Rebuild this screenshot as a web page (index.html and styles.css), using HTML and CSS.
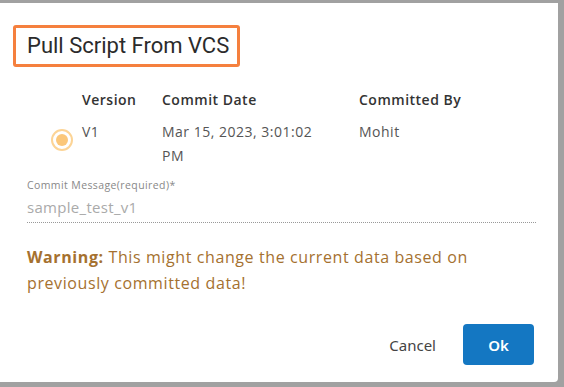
FILE: index.html
```html
<!DOCTYPE html>
<html>
<head>
    <title>Pull Script From VCS</title>
    <link rel="stylesheet" href="styles.css">
</head>
<body>
    <div class="dialog">
        <div class="title-box">
            <h1>Pull Script From VCS</h1>
        </div>

        <!-- Versions -->
        <div class="versions">
            <div class="row head">
                <div class="cell pick"></div>
                <div class="cell ver">Version</div>
                <div class="cell date">Commit Date</div>
                <div class="cell by">Committed By</div>
            </div>
            <div class="row">
                <div class="cell pick"><span class="radio"><span class="dot"></span></span></div>
                <div class="cell ver">V1</div>
                <div class="cell date">Mar 15, 2023, 3:01:02 PM</div>
                <div class="cell by">Mohit</div>
            </div>
        </div>

        <!-- Commit message -->
        <div class="field">
            <label>Commit Message(required)*</label>
            <div class="value">sample_test_v1</div>
        </div>

        <p class="warning"><strong>Warning:</strong> This might change the current data based on previously committed data!</p>

        <div class="actions">
            <button class="cancel">Cancel</button>
            <button class="ok">Ok</button>
        </div>
    </div>
</body>
</html>
```

FILE: styles.css
```css
body {
    margin: 0;
    background-color: #a1a1a1;
    font-family: "Open Sans", "Noto Sans", sans-serif;
    height: 387px;
    overflow: hidden;
}

.dialog {
    margin-top: 3px;
    width: 558px;
    height: 379px;
    background-color: #fff;
    border-radius: 0 0 4px 0;
    box-sizing: border-box;
    padding: 22px 0 0 13px;
    display: flex;
    flex-direction: column;
}

.title-box {
    align-self: flex-start;
    border: 3px solid #f5803e;
    border-radius: 3px;
    padding: 4px 8px 4px 11px;
}

h1 {
    margin: 0;
    font-family: Roboto, sans-serif;
    font-weight: 400;
    font-size: 22px;
    line-height: 28px;
    color: #2b2b2b;
}

.versions {
    margin-top: 21px;
}

.row {
    display: flex;
    font-size: 14px;
    line-height: 24px;
    letter-spacing: 0.5px;
    color: #555;
}

.row.head {
    color: #333;
    font-weight: 600;
    margin-bottom: 8px;
}

.cell.pick {
    width: 69px;
    display: flex;
    justify-content: flex-end;
}

.cell.ver {
    width: 80px;
}

.cell.date {
    width: 165px;
    padding-right: 32px;
}

.radio {
    margin: 9px 9px 0 0;
    width: 18px;
    height: 18px;
    border: 2px solid #fcd496;
    border-radius: 50%;
    display: flex;
    align-items: center;
    justify-content: center;
}

.dot {
    width: 12px;
    height: 12px;
    border-radius: 50%;
    background-color: #fbc77a;
}

.field {
    margin: 10px 22px 0 14px;
    border-bottom: 1px dotted #999;
    padding-bottom: 5px;
}

.field label {
    display: block;
    font-size: 10.5px;
    line-height: 14px;
    letter-spacing: 0.4px;
    color: #888;
}

.value {
    margin-top: 5px;
    font-size: 15px;
    line-height: 20px;
    letter-spacing: 0.3px;
    color: #aaa;
}

.warning {
    margin: 21px 0 0 14px;
    width: 460px;
    font-size: 16px;
    line-height: 26px;
    letter-spacing: 0.6px;
    color: #a5712f;
}

.warning strong {
    font-weight: 700;
}

.actions {
    margin-top: auto;
    margin-bottom: 17px;
    display: flex;
    justify-content: flex-end;
    align-items: center;
    padding-right: 24px;
}

button {
    font-family: "Noto Sans", sans-serif;
    font-size: 15px;
    border: none;
    cursor: pointer;
}

.cancel {
    background: none;
    color: #444;
    padding: 0;
    margin-right: 27px;
}

.ok {
    background-color: #1477c2;
    color: #fff;
    width: 71px;
    height: 41px;
    border-radius: 4px;
    font-weight: 600;
}
```
